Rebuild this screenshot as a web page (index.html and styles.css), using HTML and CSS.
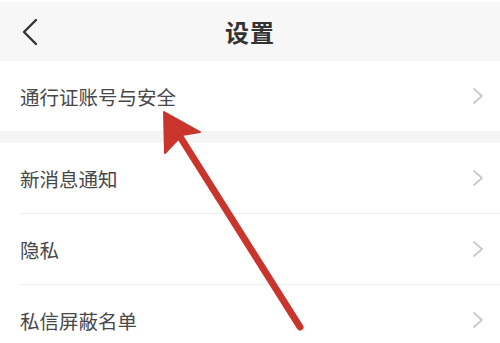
FILE: index.html
```html
<!DOCTYPE html>
<html lang="zh-CN">
<head>
<meta charset="utf-8">
<link rel="stylesheet" href="styles.css">
</head>
<body>
<div class="page">
  <div class="topline"></div>
  <header class="header">
    <svg class="back" width="18" height="28" viewBox="0 0 18 28"><path d="M15 2 L3 14 L15 26" fill="none" stroke="#333" stroke-width="2.4" stroke-linecap="round" stroke-linejoin="round"/></svg>
    <h1 class="title">设置</h1>
  </header>
  <div class="group">
    <div class="row"><span class="label">通行证账号与安全</span><svg class="chev" width="12" height="18" viewBox="0 0 12 18"><path d="M2 2 L10 9 L2 16" fill="none" stroke="#c9c9c9" stroke-width="1.8" stroke-linecap="round" stroke-linejoin="round"/></svg></div>
  </div>
  <div class="gap"></div>
  <div class="group">
    <div class="row"><span class="label">新消息通知</span><svg class="chev" width="12" height="18" viewBox="0 0 12 18"><path d="M2 2 L10 9 L2 16" fill="none" stroke="#c9c9c9" stroke-width="1.8" stroke-linecap="round" stroke-linejoin="round"/></svg></div>
    <div class="row"><span class="label">隐私</span><svg class="chev" width="12" height="18" viewBox="0 0 12 18"><path d="M2 2 L10 9 L2 16" fill="none" stroke="#c9c9c9" stroke-width="1.8" stroke-linecap="round" stroke-linejoin="round"/></svg></div>
    <div class="row"><span class="label">私信屏蔽名单</span><svg class="chev" width="12" height="18" viewBox="0 0 12 18"><path d="M2 2 L10 9 L2 16" fill="none" stroke="#c9c9c9" stroke-width="1.8" stroke-linecap="round" stroke-linejoin="round"/></svg></div>
  </div>
  <svg class="arrow" width="500" height="343" viewBox="0 0 500 343">
    <line x1="300" y1="327" x2="172" y2="124" stroke="#c9352d" stroke-width="7" stroke-linecap="round"/>
    <polygon points="164,112 200,132 182,135 165,153 164,112" fill="#c9352d" stroke="#c9352d" stroke-width="2" stroke-linejoin="round"/>
  </svg>
</div>
</body>
</html>
```
FILE: styles.css
```css
html, body {
  margin: 0;
  padding: 0;
  background: #ffffff;
}
.page {
  position: relative;
  width: 500px;
  height: 343px;
  overflow: hidden;
  font-family: "Noto Sans CJK SC", "Noto Sans", sans-serif;
  background: #ffffff;
}
.topline {
  height: 2px;
  background: #ffffff;
}
.header {
  height: 59px;
  background: #f7f7f7;
  display: flex;
  align-items: center;
  justify-content: center;
  position: relative;
}
.back {
  position: absolute;
  left: 21px;
  top: 16px;
}
.title {
  margin: 0;
  font-size: 24px;
  font-weight: 700;
  color: #333333;
  letter-spacing: 1px;
}
.group {
  background: #ffffff;
}
.row {
  height: 70px;
  margin-left: 20px;
  padding-right: 16px;
  display: flex;
  align-items: center;
  justify-content: space-between;
  border-bottom: 1px solid #efefef;
}
.row:last-child {
  border-bottom: none;
}
.label {
  font-size: 19.5px;
  color: #484848;
}
.chev {
  display: block;
}
.gap {
  height: 12px;
  background: #f5f5f5;
}
.arrow {
  position: absolute;
  left: 0;
  top: 0;
  pointer-events: none;
}
```
